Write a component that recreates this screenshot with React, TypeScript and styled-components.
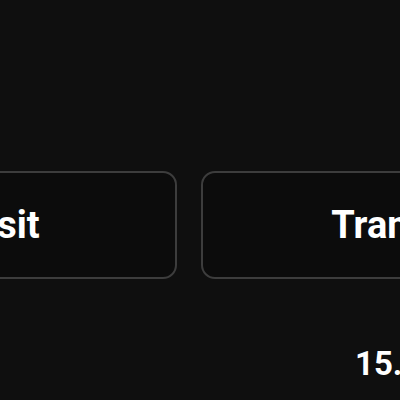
import React from 'react';
import styled, { createGlobalStyle } from 'styled-components';

const GlobalStyle = createGlobalStyle`
  html, body {
    margin: 0;
    padding: 0;
    background: #0f0f0f;
  }
`;

const Page = styled.div`
  width: 400px;
  height: 400px;
  overflow: hidden;
  padding-top: 171px;
  box-sizing: border-box;
  background: #0f0f0f;
  font-family: Roboto, 'Liberation Sans', sans-serif;
`;

const ActionRow = styled.div`
  display: flex;
  gap: 24px;
  margin-left: -228px;
`;

const ActionButton = styled.button`
  flex: 0 0 405px;
  height: 108px;
  display: flex;
  align-items: center;
  justify-content: center;
  background: #0c0c0c;
  border: 2px solid #3d3d3d;
  border-radius: 14px;
  color: #ffffff;
  font-family: inherit;
  font-size: 38px;
  font-weight: 700;
  padding: 0;
`;

const BalanceRow = styled.div`
  margin-top: 68px;
  padding-left: 355px;
  white-space: nowrap;
  color: #ffffff;
  font-size: 33px;
  font-weight: 700;
  line-height: 1;
`;

const App: React.FC = () => {
  const actions = ['Deposit', 'Transfer'];

  return (
    <>
      <GlobalStyle />
      <Page>
        <ActionRow>
          {actions.map(label => (
            <ActionButton key={label}>{label}</ActionButton>
          ))}
        </ActionRow>
        <BalanceRow>15.00</BalanceRow>
      </Page>
    </>
  );
};

export default App;
